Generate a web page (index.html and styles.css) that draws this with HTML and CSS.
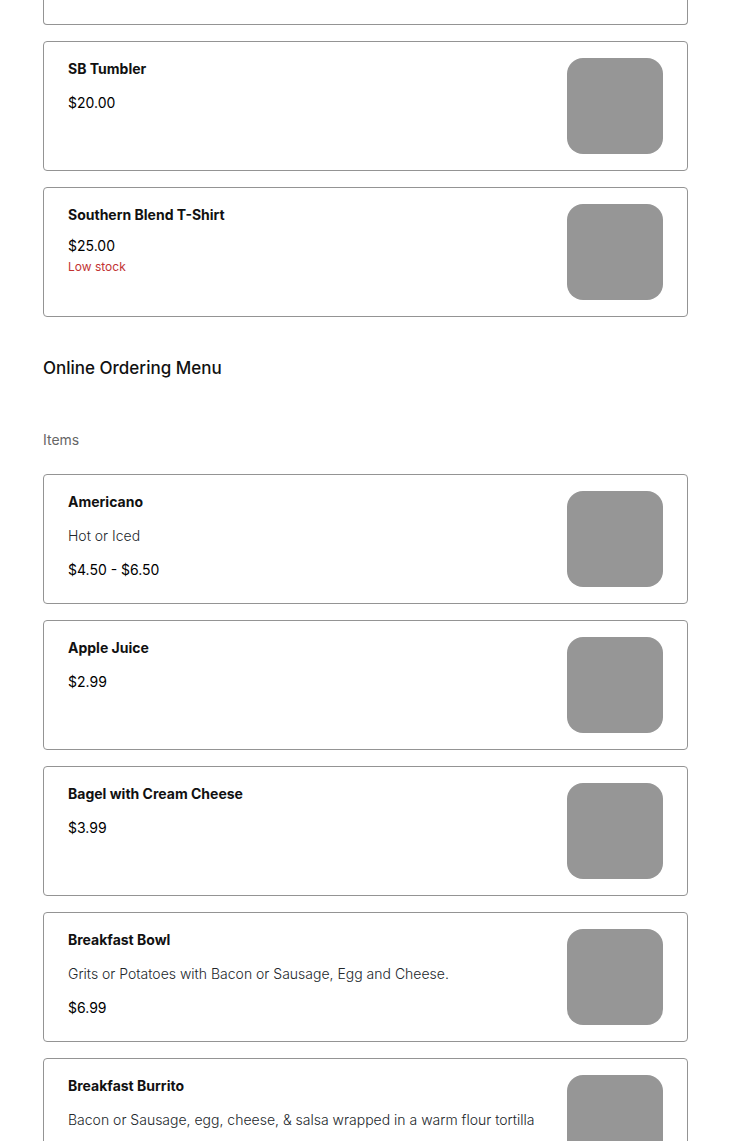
FILE: index.html
```html
<!DOCTYPE html>
<html lang="en">
<head>
    <meta charset="UTF-8">
    <meta name="viewport" content="width=device-width, initial-scale=1.0">
    <title>Online Ordering Menu</title>
    <link rel="stylesheet" href="styles.css">
</head>
<body>

<main class="menu">
    <section class="item-list">
        <article class="item item-cut"></article>

        <article class="item">
            <div class="item-info">
                <h3>SB Tumbler</h3>
                <p class="price">$20.00</p>
            </div>
            <div class="item-image"></div>
        </article>

        <article class="item">
            <div class="item-info">
                <h3>Southern Blend T-Shirt</h3>
                <div class="stock-info">
                    <p class="price">$25.00</p>
                    <p class="low-stock">Low stock</p>
                </div>
            </div>
            <div class="item-image"></div>
        </article>
    </section>

    <h1>Online Ordering Menu</h1>
    <h2>Items</h2>

    <section class="item-list">
        <article class="item">
            <div class="item-info">
                <h3>Americano</h3>
                <p class="description">Hot or Iced</p>
                <p class="price">$4.50 - $6.50</p>
            </div>
            <div class="item-image"></div>
        </article>

        <article class="item">
            <div class="item-info">
                <h3>Apple Juice</h3>
                <p class="price">$2.99</p>
            </div>
            <div class="item-image"></div>
        </article>

        <article class="item">
            <div class="item-info">
                <h3>Bagel with Cream Cheese</h3>
                <p class="price">$3.99</p>
            </div>
            <div class="item-image"></div>
        </article>

        <article class="item">
            <div class="item-info">
                <h3>Breakfast Bowl</h3>
                <p class="description">Grits or Potatoes with Bacon or Sausage, Egg and Cheese.</p>
                <p class="price">$6.99</p>
            </div>
            <div class="item-image"></div>
        </article>

        <article class="item">
            <div class="item-info">
                <h3>Breakfast Burrito</h3>
                <p class="description">Bacon or Sausage, egg, cheese, &amp; salsa wrapped in a warm flour tortilla</p>
            </div>
            <div class="item-image"></div>
        </article>
    </section>
</main>

</body>
</html>
```

FILE: styles.css
```css
* {
    box-sizing: border-box;
}
body {
    margin: 0;
    background-color: #fff;
    color: #111;
    font-family: Inter, "Liberation Sans", sans-serif;
    font-size: 14px;
    line-height: 22px;
}
h1, h2, h3, p {
    margin: 0;
}
.menu {
    padding: 0 42px 0 43px;
}
.item-list {
    display: flex;
    flex-direction: column;
    gap: 16px;
}
.item {
    display: flex;
    justify-content: space-between;
    gap: 24px;
    min-height: 130px;
    padding: 16px 24px;
    border: 1px solid #949494;
    border-radius: 4px;
}
/* last card of the previous list, only its bottom edge is visible */
.item-cut {
    min-height: 25px;
    padding: 0;
    border-top: none;
    border-radius: 0 0 4px 4px;
}
.item-info {
    display: flex;
    flex-direction: column;
    gap: 12px;
}
.item h3 {
    font-size: 14px;
    font-weight: 700;
}
.description {
    color: #22272b;
    font-weight: 300;
}
.price {
    color: #000;
}
.stock-info {
    margin-top: -3px;
}
.low-stock {
    color: #c23333;
    font-size: 12px;
    line-height: 20px;
}
.item-image {
    flex: none;
    width: 96px;
    height: 96px;
    border-radius: 16px;
    background-color: #969696;
}
h1 {
    margin-top: 38px;
    font-size: 17px;
    font-weight: 500;
    line-height: 26px;
}
h2 {
    margin: 48px 0 23px;
    color: #666;
    font-size: 14px;
    font-weight: 400;
}
```
